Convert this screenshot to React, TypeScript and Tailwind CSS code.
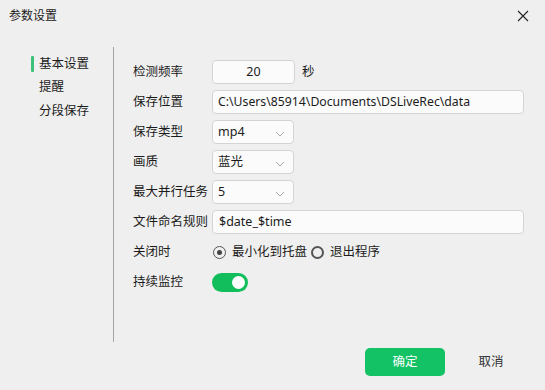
import React from "react";

const Chevron = () => (
  <svg width="10" height="6" viewBox="0 0 10 6" className="absolute right-[8px] top-[10px]">
    <path d="M1 1 L5 5 L9 1" fill="none" stroke="#a8a8a8" strokeWidth="1" />
  </svg>
);

const Select = ({ value }: { value: string }) => (
  <div className="relative w-[82px] h-6 rounded-[4px] border border-[#d4d4d4] bg-[#fbfbfb] pl-[5px] flex items-center text-[12.5px] text-[#1b1b1b]">
    {value}
    <Chevron />
  </div>
);

const Row = ({ label, children }: { label: string; children: React.ReactNode }) => (
  <div className="flex items-center h-6">
    <div className="w-[79px] text-[12.5px] text-[#1b1b1b]">{label}</div>
    {children}
  </div>
);

export default function App() {
  return (
    <div
      className="w-[545px] h-[390px] bg-[#efefef] flex flex-col overflow-hidden"
      style={{ fontFamily: '"Noto Sans", "Noto Sans CJK SC", sans-serif' }}
    >
      <div className="h-[31px] flex items-center justify-between pl-[9px] pr-[16px]">
        <span className="text-[12px] text-[#1b1b1b]">参数设置</span>
        <svg width="12" height="12" viewBox="0 0 12 12">
          <path d="M1 1 L11 11 M11 1 L1 11" stroke="#222" strokeWidth="1.1" />
        </svg>
      </div>
      <div className="flex mt-[16px] h-[295px]">
        <div className="w-[113px] pl-[31px] pt-[9px] flex flex-col gap-[7.5px]">
          <div className="flex items-center h-4">
            <div className="w-[3px] h-[16px] bg-[#3cc07a] rounded-[1px]" />
            <span className="ml-[5px] text-[12.5px] text-[#1b1b1b]">基本设置</span>
          </div>
          <div className="h-4 flex items-center pl-[8px] text-[12.5px] text-[#1b1b1b]">提醒</div>
          <div className="h-4 flex items-center pl-[8px] text-[12.5px] text-[#1b1b1b]">分段保存</div>
        </div>
        <div className="w-px bg-[#a3a3a3]" />
        <div className="flex-1 pl-[19px] pr-[21px] pt-[13px] flex flex-col gap-1.5">
          <Row label="检测频率">
            <div className="w-[83px] h-6 rounded-[4px] border border-[#d4d4d4] bg-[#fbfbfb] flex items-center justify-center text-[12.5px] text-[#1b1b1b]">
              20
            </div>
            <span className="ml-[7px] text-[12.5px] text-[#1b1b1b]">秒</span>
          </Row>
          <Row label="保存位置">
            <div className="flex-1 h-6 rounded-[4px] border border-[#d4d4d4] bg-[#fbfbfb] flex items-center pl-[5px] text-[12.25px] text-[#1b1b1b]">
              C:\Users\85914\Documents\DSLiveRec\data
            </div>
          </Row>
          <Row label="保存类型">
            <Select value="mp4" />
          </Row>
          <Row label="画质">
            <Select value="蓝光" />
          </Row>
          <Row label="最大并行任务">
            <Select value="5" />
          </Row>
          <Row label="文件命名规则">
            <div className="flex-1 h-6 rounded-[4px] border border-[#d4d4d4] bg-[#fbfbfb] flex items-center pl-[6px] text-[12.5px] text-[#1b1b1b]">
              $date_$time
            </div>
          </Row>
          <Row label="关闭时">
            <div className="flex items-center ml-[1px]">
              <div className="w-[13px] h-[13px] rounded-full border border-[#555] flex items-center justify-center">
                <div className="w-[5px] h-[5px] rounded-full bg-[#444]" />
              </div>
              <span className="ml-[6px] text-[12.5px] text-[#1b1b1b]">最小化到托盘</span>
              <div className="ml-[4px] w-[13px] h-[13px] rounded-full border-[2px] border-[#555]" />
              <span className="ml-[6px] text-[12.5px] text-[#1b1b1b]">退出程序</span>
            </div>
          </Row>
          <Row label="持续监控">
            <div className="w-[36px] h-[19px] rounded-full bg-[#12bd5c] relative">
              <div className="absolute right-[3px] top-[3px] w-[13px] h-[13px] rounded-full bg-white" />
            </div>
          </Row>
        </div>
      </div>
      <div className="flex justify-end items-center mt-[6px] pr-[14px] gap-[6px]">
        <div className="w-[80px] h-[28px] rounded-[5px] bg-[#12c264] flex items-center justify-center text-[12.5px] text-white">
          确定
        </div>
        <div className="w-[80px] h-[28px] flex items-center justify-center text-[12.5px] text-[#333]">
          取消
        </div>
      </div>
    </div>
  );
}
